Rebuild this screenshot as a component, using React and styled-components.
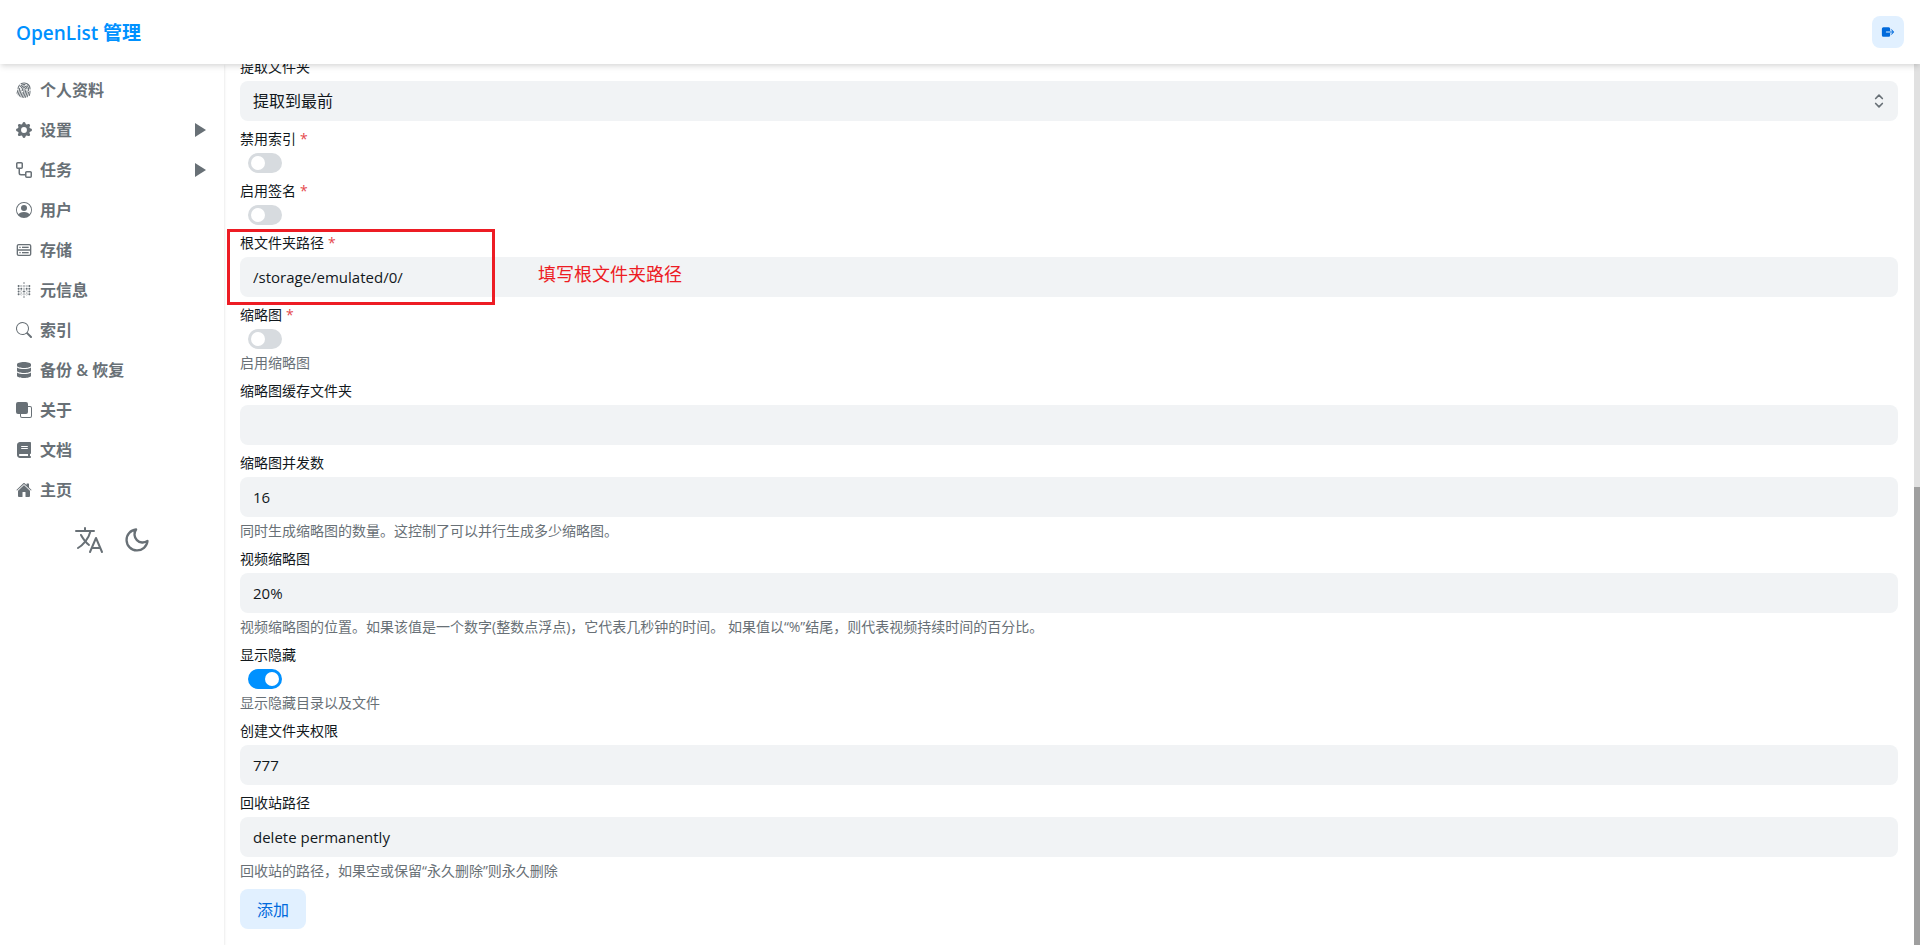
import React from 'react';
import styled, { createGlobalStyle } from 'styled-components';
import { BsFingerprint, BsGearFill, BsPersonCircle, BsSearch, BsFront } from 'react-icons/bs';
import { CgDatabase } from 'react-icons/cg';
import { SiMetabase } from 'react-icons/si';
import { FaDatabase } from 'react-icons/fa';
import { FaBook } from 'react-icons/fa6';
import { FiMoon } from 'react-icons/fi';
import { IoExit, IoLanguageOutline, IoHome } from 'react-icons/io5';
import { HiOutlineSelector } from 'react-icons/hi';

const WorkflowIcon = () => (
  <svg width='16' height='16' viewBox='0 0 16 16' fill='currentColor'>
    <path d='M0 1.75C0 .784.784 0 1.75 0h3.5C6.216 0 7 .784 7 1.75v3.5A1.75 1.75 0 0 1 5.25 7H4v4a1 1 0 0 0 1 1h4v-1.25C9 9.784 9.784 9 10.75 9h3.5c.966 0 1.75.784 1.75 1.75v3.5A1.75 1.75 0 0 1 14.25 16h-3.5A1.75 1.75 0 0 1 9 14.25v-.75H5A2.5 2.5 0 0 1 2.5 11V7h-.75A1.75 1.75 0 0 1 0 5.25Zm1.75-.25a.25.25 0 0 0-.25.25v3.5c0 .138.112.25.25.25h3.5a.25.25 0 0 0 .25-.25v-3.5a.25.25 0 0 0-.25-.25Zm9 9a.25.25 0 0 0-.25.25v3.5c0 .138.112.25.25.25h3.5a.25.25 0 0 0 .25-.25v-3.5a.25.25 0 0 0-.25-.25Z' />
  </svg>
);

const menu = [
  { label: '个人资料', Icon: BsFingerprint },
  { label: '设置', Icon: BsGearFill, group: true },
  { label: '任务', Icon: WorkflowIcon, group: true },
  { label: '用户', Icon: BsPersonCircle },
  { label: '存储', Icon: CgDatabase },
  { label: '元信息', Icon: SiMetabase },
  { label: '索引', Icon: BsSearch },
  { label: '备份 & 恢复', Icon: FaDatabase },
  { label: '关于', Icon: BsFront },
  { label: '文档', Icon: FaBook },
  { label: '主页', Icon: IoHome },
];

const fields = [
  { name: 'extract_folder', label: '提取文件夹', type: 'select', value: '提取到最前' },
  { name: 'disable_index', label: '禁用索引', type: 'bool', required: true },
  { name: 'enable_sign', label: '启用签名', type: 'bool', required: true },
  {
    name: 'root_folder_path',
    label: '根文件夹路径',
    type: 'text',
    value: '/storage/emulated/0/',
    required: true,
    note: '填写根文件夹路径',
  },
  { name: 'thumbnail', label: '缩略图', type: 'bool', required: true, help: '启用缩略图' },
  { name: 'thumb_cache_folder', label: '缩略图缓存文件夹', type: 'text', value: '' },
  {
    name: 'thumb_concurrency',
    label: '缩略图并发数',
    type: 'text',
    value: '16',
    help: '同时生成缩略图的数量。这控制了可以并行生成多少缩略图。',
  },
  {
    name: 'video_thumb_pos',
    label: '视频缩略图',
    type: 'text',
    value: '20%',
    help: '视频缩略图的位置。如果该值是一个数字(整数点浮点)，它代表几秒钟的时间。 如果值以“%”结尾，则代表视频持续时间的百分比。',
  },
  { name: 'show_hidden', label: '显示隐藏', type: 'bool', value: true, help: '显示隐藏目录以及文件' },
  { name: 'mkdir_perm', label: '创建文件夹权限', type: 'text', value: '777' },
  {
    name: 'recycle_bin_path',
    label: '回收站路径',
    type: 'text',
    value: 'delete permanently',
    help: '回收站的路径，如果空或保留“永久删除”则永久删除',
  },
];

function Control({ field }) {
  if (field.type === 'bool') {
    return <Switch type='checkbox' role='switch' id={field.name} defaultChecked={field.value} />;
  }
  if (field.type === 'select') {
    return (
      <SelectWrap>
        <Select id={field.name} defaultValue={field.value}>
          <option>{field.value}</option>
        </Select>
        <HiOutlineSelector />
      </SelectWrap>
    );
  }
  return <Input type='text' id={field.name} defaultValue={field.value} />;
}

function Field({ field }) {
  return (
    <StyledField>
      <Label htmlFor={field.name}>
        {field.label}
        {field.required && <Required>*</Required>}
      </Label>
      <Control field={field} />
      {field.help && <Help>{field.help}</Help>}
      {field.note && (
        <>
          <Highlight />
          <Note>{field.note}</Note>
        </>
      )}
    </StyledField>
  );
}

function App() {
  return (
    <Page>
      <GlobalStyle />

      {/* Header */}
      <Header>
        <Title>OpenList 管理</Title>
        <LogoutButton aria-label='logout'>
          <IoExit />
        </LogoutButton>
      </Header>

      <Body>
        {/* Side menu */}
        <Sidebar>
          <nav>
            {menu.map(({ label, Icon, group }) => (
              <MenuItem key={label} href='#'>
                <Icon />
                <span>{label}</span>
                {group && <Arrow />}
              </MenuItem>
            ))}
          </nav>
          <Tools>
            <ToolButton aria-label='language' $size={32}>
              <IoLanguageOutline />
            </ToolButton>
            <ToolButton aria-label='color mode' $size={28}>
              <FiMoon />
            </ToolButton>
          </Tools>
        </Sidebar>

        {/* Storage form, scrolled to its end */}
        <Form onSubmit={(e) => e.preventDefault()}>
          {fields.map((field) => (
            <Field key={field.name} field={field} />
          ))}
          <SubmitButton type='submit'>添加</SubmitButton>
        </Form>
        <ScrollTrack>
          <ScrollThumb />
        </ScrollTrack>
      </Body>
    </Page>
  );
}

const GlobalStyle = createGlobalStyle`
  *{
    box-sizing: border-box;
  }

  body{
    margin: 0;
    color: #11181c;
    background-color: #fff;
    font-family: 'Open Sans', 'Noto Sans CJK SC', sans-serif;
    font-size: 16px;
    line-height: 24px;
  }

  button,
  input,
  select{
    font-family: inherit;
    color: inherit;
    border: none;
  }
`;

const Page = styled.div`
  display: flex;
  flex-direction: column;
  height: 100vh;
`;

const Header = styled.header`
  position: relative;
  z-index: 2;
  display: flex;
  flex: none;
  justify-content: space-between;
  align-items: center;
  height: 64px;
  padding: 0 16px;
  background-color: #fff;
  box-shadow: 0 4px 6px -1px rgba(0, 0, 0, 0.1), 0 2px 4px -1px rgba(0, 0, 0, 0.06);
`;

const Title = styled.h1`
  margin: 0;
  padding-top: 2px;
  color: #0091ff;
  font-size: 19px;
  font-weight: 600;
  line-height: 28px;
`;

const LogoutButton = styled.button`
  display: flex;
  justify-content: center;
  align-items: center;
  width: 32px;
  height: 32px;
  padding: 0;
  border-radius: 8px;
  background-color: #e1f0ff;
  color: #006adc;
  font-size: 14px;
`;

const Body = styled.div`
  display: flex;
  flex: 1;
  min-height: 0;
`;

const Sidebar = styled.aside`
  flex: none;
  width: 224px;
  padding: 6px 8px;
  color: #687076;
  box-shadow: 0 1px 3px rgba(0, 0, 0, 0.1), 0 1px 2px rgba(0, 0, 0, 0.06);
`;

const MenuItem = styled.a`
  display: flex;
  align-items: center;
  gap: 8px;
  height: 40px;
  padding: 0 8px;
  color: inherit;
  font-weight: 600;
  text-decoration: none;

  span{
    flex: 1;
  }
`;

const Arrow = styled.i`
  border: 7px solid transparent;
  border-left: 11px solid #687076;
  border-right: 0;
  margin-right: 2px;
`;

const Tools = styled.div`
  display: flex;
  justify-content: center;
  align-items: center;
  gap: 18px;
  padding: 14px 0;
`;

const ToolButton = styled.button`
  display: flex;
  padding: 0;
  background: none;
  font-size: ${({ $size }) => $size}px;
`;

const Form = styled.form`
  display: flex;
  flex: 1;
  flex-direction: column;
  justify-content: flex-end;
  align-items: flex-start;
  gap: 8px;
  min-width: 0;
  padding: 16px;
  overflow: hidden;
`;

const StyledField = styled.div`
  position: relative;
  display: flex;
  flex: none;
  flex-direction: column;
  align-items: flex-start;
  gap: 4px;
  width: 100%;
`;

const Label = styled.label`
  font-size: 14px;
  line-height: 20px;
`;

const Required = styled.span`
  margin-left: 4px;
  color: #e5484d;
`;

const Input = styled.input`
  width: 100%;
  height: 40px;
  padding: 0 13px;
  border-radius: 8px;
  background-color: #f1f3f5;
  font-size: 15px;
`;

const SelectWrap = styled.div`
  position: relative;
  width: 100%;

  svg{
    position: absolute;
    top: 10px;
    right: 9px;
    color: #687076;
    font-size: 20px;
    pointer-events: none;
  }
`;

const Select = styled.select`
  display: block;
  width: 100%;
  height: 40px;
  padding: 0 13px;
  border-radius: 8px;
  background-color: #f1f3f5;
  font-size: 16px;
  appearance: none;
`;

const Switch = styled.input`
  display: flex;
  align-items: center;
  width: 34px;
  height: 20px;
  margin: 0 8px;
  padding: 0 3px;
  border-radius: 10px;
  background-color: #d7dbdf;
  appearance: none;

  &:before{
    content: '';
    width: 14px;
    height: 14px;
    border-radius: 50%;
    background-color: #fff;
  }

  &:checked{
    justify-content: flex-end;
    background-color: #0091ff;
  }
`;

const Help = styled.div`
  color: #687076;
  font-size: 14px;
  line-height: 20px;
`;

// red frame and note laid over the root path field
const Highlight = styled.div`
  position: absolute;
  top: -4px;
  left: -13px;
  width: 268px;
  height: 76px;
  border: 3px solid #ed1c24;
  pointer-events: none;
`;

const Note = styled.div`
  position: absolute;
  top: 29px;
  left: 298px;
  color: #ed1c24;
  font-size: 18px;
`;

const SubmitButton = styled.button`
  flex: none;
  height: 40px;
  padding: 0 17px;
  border-radius: 8px;
  background-color: #e1f0ff;
  color: #006adc;
  font-size: 16px;
`;

const ScrollTrack = styled.div`
  display: flex;
  flex: none;
  align-items: flex-end;
  width: 6px;
  background-color: #e1e1e1;
`;

const ScrollThumb = styled.div`
  width: 100%;
  height: 52%;
  background-color: #9f9f9f;
`;

export default App;
